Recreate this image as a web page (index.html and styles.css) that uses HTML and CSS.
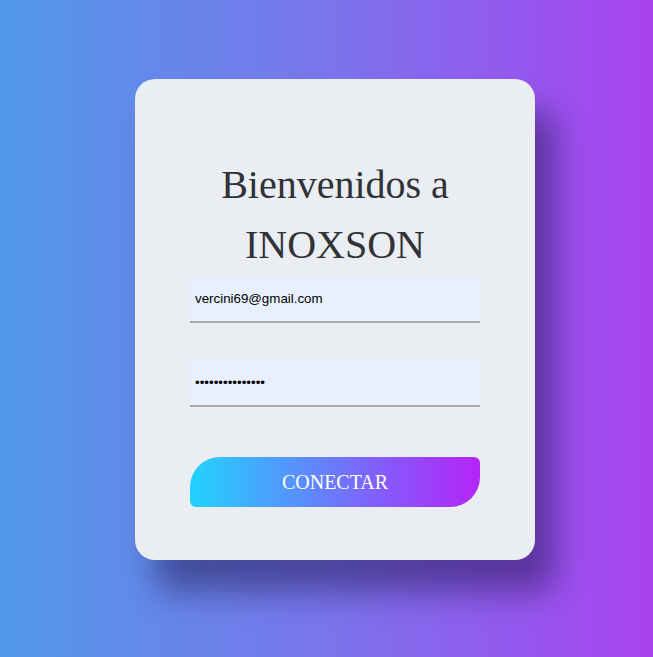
FILE: index.html
```html
<!DOCTYPE html>
<html lang="es">
<head>
<meta charset="utf-8">
<title>INOXSON</title>
<link rel="stylesheet" href="styles.css">
</head>
<body>
<main class="page">
  <form class="card">
    <h1 class="title">Bienvenidos a<br>INOXSON</h1>
    <input class="field" type="email" value="vercini69@gmail.com">
    <input class="field field-pass" type="password" value="abcdefghijklmno">
    <button class="btn" type="button">CONECTAR</button>
  </form>
</main>
</body>
</html>
```

FILE: styles.css
```css
html, body {
  margin: 0;
  height: 100%;
}
body {
  background: linear-gradient(to right, #5199e8 0%, #7a75ec 50%, #a843ef 100%);
  overflow: hidden;
}
.page {
  padding: 79px 0 0 135px;
}
.card {
  box-sizing: border-box;
  width: 400px;
  height: 481px;
  padding: 76px 55px 0;
  background: #eaedf1;
  border-radius: 20px;
  box-shadow: 20px 32px 32px rgba(20, 10, 60, 0.45);
  display: flex;
  flex-direction: column;
}
.title {
  margin: 0 0 1px;
  font-family: "Liberation Serif", "Times New Roman", serif;
  font-weight: normal;
  font-size: 40px;
  line-height: 60px;
  color: #2f3336;
  text-align: center;
}
.field {
  box-sizing: border-box;
  width: 290px;
  height: 47px;
  margin: 0;
  padding: 0 5px;
  border: none;
  border-bottom: 2px solid #a9abae;
  background: #e8f0fe;
  font-family: "Liberation Sans", Arial, sans-serif;
  font-size: 13.333px;
  color: #000;
  outline: none;
}
.field-pass {
  margin-top: 37px;
}
.btn {
  margin-top: 50px;
  width: 290px;
  height: 50px;
  border: none;
  border-radius: 30px 6px 30px 6px;
  background: linear-gradient(to right, #22d3fd 0%, #5c8bfd 40%, #8a55fb 70%, #b424f8 100%);
  color: #fff;
  font-family: "Liberation Serif", "Times New Roman", serif;
  font-size: 20px;
  padding: 0;
  cursor: pointer;
}
```
